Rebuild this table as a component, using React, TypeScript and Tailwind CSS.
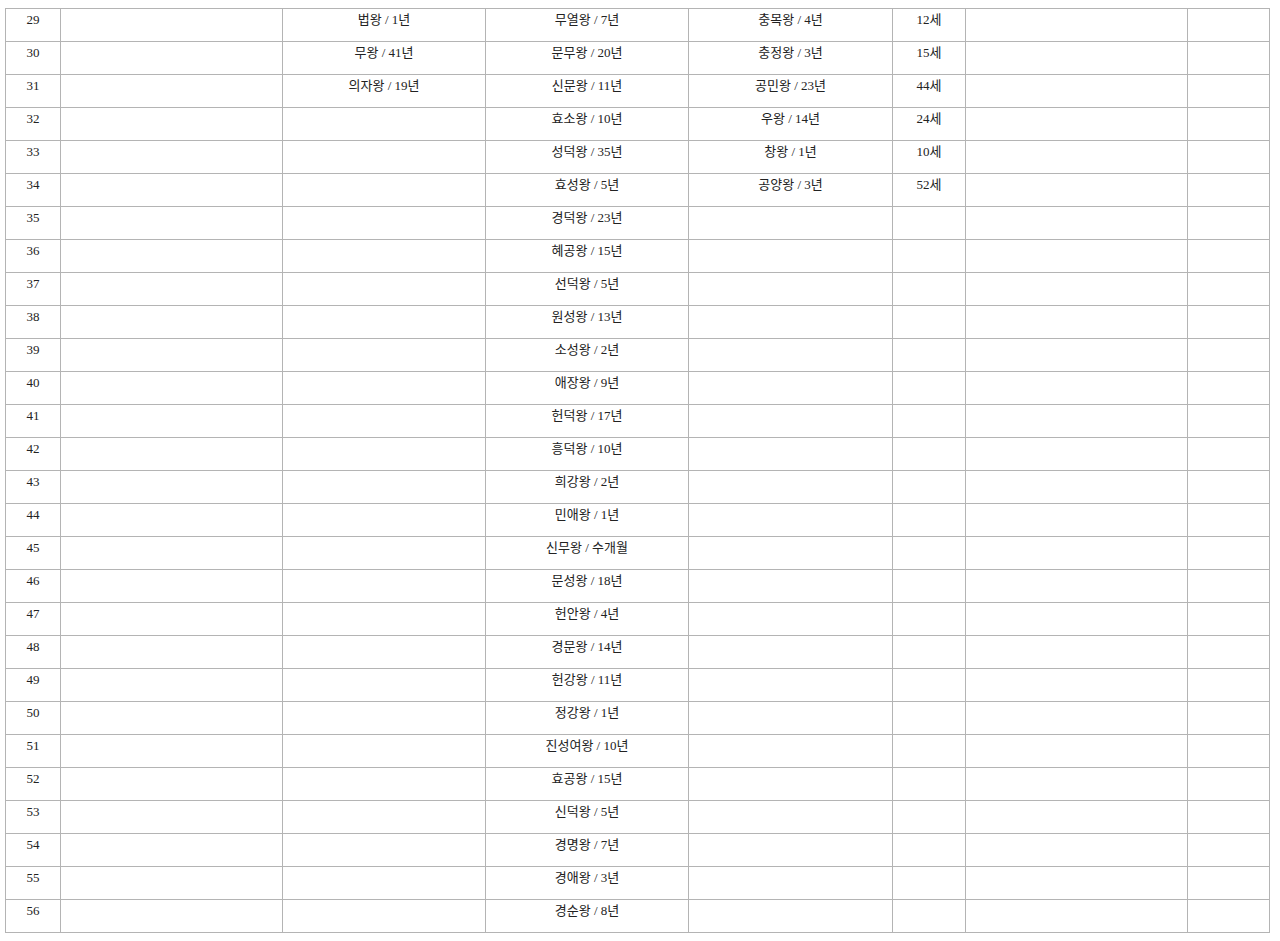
import React from "react";

const rows: [number, string, string, string, string][] = [
  [29, "법왕 / 1년", "무열왕 / 7년", "충목왕 / 4년", "12세"],
  [30, "무왕 / 41년", "문무왕 / 20년", "충정왕 / 3년", "15세"],
  [31, "의자왕 / 19년", "신문왕 / 11년", "공민왕 / 23년", "44세"],
  [32, "", "효소왕 / 10년", "우왕 / 14년", "24세"],
  [33, "", "성덕왕 / 35년", "창왕 / 1년", "10세"],
  [34, "", "효성왕 / 5년", "공양왕 / 3년", "52세"],
  [35, "", "경덕왕 / 23년", "", ""],
  [36, "", "혜공왕 / 15년", "", ""],
  [37, "", "선덕왕 / 5년", "", ""],
  [38, "", "원성왕 / 13년", "", ""],
  [39, "", "소성왕 / 2년", "", ""],
  [40, "", "애장왕 / 9년", "", ""],
  [41, "", "헌덕왕 / 17년", "", ""],
  [42, "", "흥덕왕 / 10년", "", ""],
  [43, "", "희강왕 / 2년", "", ""],
  [44, "", "민애왕 / 1년", "", ""],
  [45, "", "신무왕 / 수개월", "", ""],
  [46, "", "문성왕 / 18년", "", ""],
  [47, "", "헌안왕 / 4년", "", ""],
  [48, "", "경문왕 / 14년", "", ""],
  [49, "", "헌강왕 / 11년", "", ""],
  [50, "", "정강왕 / 1년", "", ""],
  [51, "", "진성여왕 / 10년", "", ""],
  [52, "", "효공왕 / 15년", "", ""],
  [53, "", "신덕왕 / 5년", "", ""],
  [54, "", "경명왕 / 7년", "", ""],
  [55, "", "경애왕 / 3년", "", ""],
  [56, "", "경순왕 / 8년", "", ""],
];

const td = "border border-[#b4b4b4] h-[33px] p-0 align-top text-center";

export default function App() {
  return (
    <div className="bg-white min-h-[941px] pt-[8px] pl-[5px] text-[13px] leading-[22px] text-[#222] [font-family:'Liberation_Serif','Noto_Sans_CJK_KR',serif]">
      <table className="table-fixed border-collapse w-[1264px]">
        <colgroup>
          <col className="w-[55px]" />
          <col className="w-[222px]" />
          <col className="w-[203px]" />
          <col className="w-[203px]" />
          <col className="w-[204px]" />
          <col className="w-[73px]" />
          <col className="w-[222px]" />
          <col className="w-[82px]" />
        </colgroup>
        <tbody>
          {rows.map((r) => (
            <tr key={r[0]}>
              <td className={td}>{r[0]}</td>
              <td className={td}></td>
              <td className={td}>{r[1]}</td>
              <td className={td}>{r[2]}</td>
              <td className={td}>{r[3]}</td>
              <td className={td}>{r[4]}</td>
              <td className={td}></td>
              <td className={td}></td>
            </tr>
          ))}
        </tbody>
      </table>
    </div>
  );
}
